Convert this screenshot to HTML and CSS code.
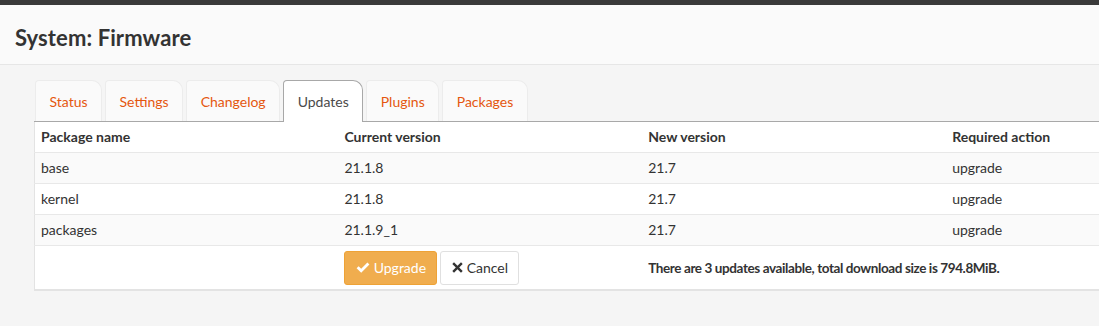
FILE: index.html
```html
<!DOCTYPE html>
<html lang="en">
<head>
  <meta charset="UTF-8" />
  <title>System: Firmware</title>
  <link rel="stylesheet" href="styles.css">
</head>
<body>
  <div class="topbar"></div>

  <header class="page-head">
    <h1>System: Firmware</h1>
  </header>

  <main class="content">
    <ul class="tabs">
      <li><a href="#">Status</a></li>
      <li><a href="#">Settings</a></li>
      <li><a href="#">Changelog</a></li>
      <li class="active"><a href="#">Updates</a></li>
      <li><a href="#">Plugins</a></li>
      <li><a href="#">Packages</a></li>
    </ul>

    <table class="updates">
      <thead>
        <tr>
          <th>Package name</th>
          <th>Current version</th>
          <th>New version</th>
          <th>Required action</th>
        </tr>
      </thead>
      <tbody>
        <tr><td>base</td><td>21.1.8</td><td>21.7</td><td>upgrade</td></tr>
        <tr><td>kernel</td><td>21.1.8</td><td>21.7</td><td>upgrade</td></tr>
        <tr><td>packages</td><td>21.1.9_1</td><td>21.7</td><td>upgrade</td></tr>
        <tr class="actions">
          <td></td>
          <td>
            <div class="btns">
              <button class="btn btn-primary">
                <svg width="14" height="12" viewBox="0 0 14 12"><path d="M0.6 6.2 L2.6 4.2 L5.2 6.8 L11.4 0.6 L13.4 2.6 L5.2 10.8 Z" fill="#fff"/></svg>
                Upgrade
              </button>
              <button class="btn btn-default">
                <svg width="11" height="11" viewBox="0 0 11 11"><path d="M2 0.3 L5.5 3.8 L9 0.3 L10.7 2 L7.2 5.5 L10.7 9 L9 10.7 L5.5 7.2 L2 10.7 L0.3 9 L3.8 5.5 L0.3 2 Z" fill="#333"/></svg>
                Cancel
              </button>
            </div>
          </td>
          <td colspan="2" class="summary">There are 3 updates available, total download size is 794.8MiB.</td>
        </tr>
      </tbody>
    </table>
  </main>
</body>
</html>
```

FILE: styles.css
```css
* { box-sizing: border-box; }
html, body { overflow: hidden; }
body {
  font-family: 'Lato', sans-serif;
  font-size: 14px;
  margin: 0;
  padding: 0;
  background: #f5f5f5;
  color: #333;
  width: 1300px;
}
.topbar {
  height: 5px;
  background: #3a3a3a;
}
.page-head {
  background: #fafafa;
  border-bottom: 1px solid #e6e6e6;
  height: 60px;
  padding: 0 15px;
  display: flex;
  align-items: center;
}
.page-head h1 {
  margin: 0;
  font-size: 22px;
  font-weight: 700;
  color: #333;
  padding-top: 6px;
  letter-spacing: 0.1px;
}
.content {
  padding: 15px 0 0 34px;
}
.tabs {
  list-style: none;
  margin: 0;
  padding: 0 0 0 1px;
  display: flex;
  gap: 3px;
  border-bottom: 1px solid #a8a8a8;
  width: 1216px;
}
.tabs li {
  background: #fafafa;
  border: 1px solid #ececec;
  border-bottom: none;
  border-radius: 4px 10px 0 0;
  height: 41px;
  margin-bottom: -1px;
}
.tabs li a {
  display: block;
  padding: 0 13.5px;
  line-height: 41px;
  color: #e5570f;
  text-decoration: none;
}
.tabs li.active {
  background: #fff;
  border-color: #a8a8a8;
  height: 42px;
}
.tabs li.active a {
  color: #4a4a4a;
}
.updates {
  width: 1216px;
  border-collapse: collapse;
  background: #fff;
  border-left: 1px solid #e3e3e3;
  border-bottom: 2px solid #e3e3e3;
  table-layout: fixed;
}
.updates th, .updates td {
  text-align: left;
  padding: 0 6px;
  height: 31px;
  border-top: 1px solid #e8e8e8;
}
.updates th {
  font-weight: 700;
  border-top: none;
  height: 30px;
}
.updates tbody tr:nth-child(odd) { background: #fafafa; }
.updates tr.actions { background: #fff; }
.updates tr.actions td { height: 45px; padding-top: 1px; }
.btns {
  display: flex;
  gap: 3px;
}
.btn {
  font-family: inherit;
  font-size: 14px;
  height: 34px;
  padding: 0 10px;
  border-radius: 3px;
  display: flex;
  align-items: center;
  gap: 4px;
  cursor: pointer;
}
.btn-primary {
  background: #f0ad4e;
  border: 1px solid #eea236;
  color: #fff;
  width: 93px;
  justify-content: center;
}
.btn-default {
  background: #fff;
  border: 1px solid #e0e0e0;
  color: #333;
  width: 79px;
  justify-content: center;
}
.summary {
  font-weight: 700;
  font-size: 13.5px;
  letter-spacing: -0.4px;
}
```
